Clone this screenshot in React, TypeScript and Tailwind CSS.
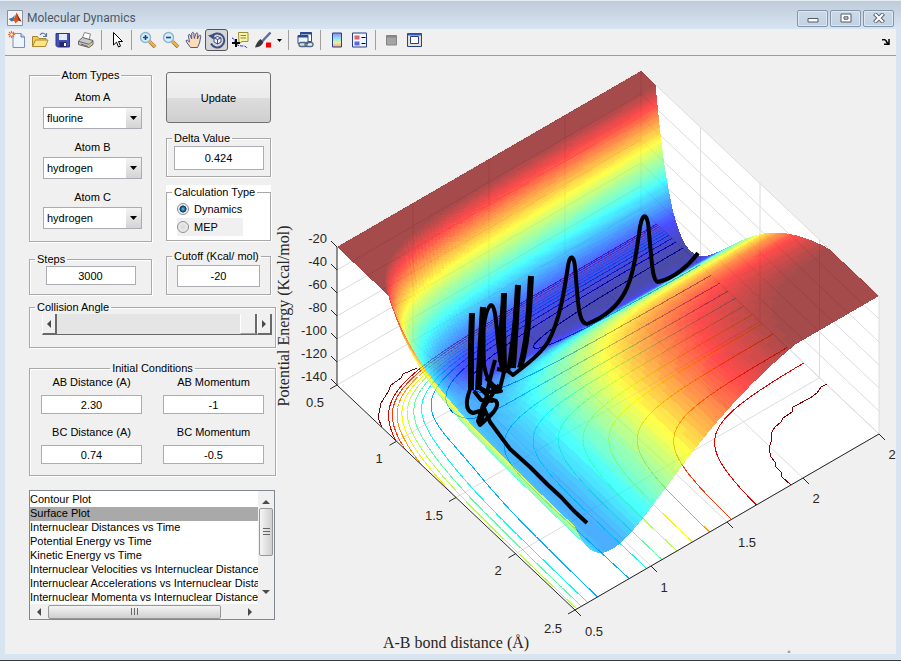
import React, { ReactNode, useMemo, useState } from "react";

/* ---------- LEPS potential for collinear F + H2 ---------- */

const HF = { d: 136, beta: 2.2187, re: 0.917, s: 0.145 };
const HH = { d: 106, beta: 1.942, re: 0.7419, s: 0.12 };
type Bond = typeof HF;

function integrals(bond: Bond, r: number): [number, number] {
  const e1 = Math.exp(-bond.beta * (r - bond.re));
  const e2 = e1 * e1;
  const k = bond.d / (4 * (1 + bond.s));
  return [
    k * ((3 + bond.s) * e2 - (2 + 6 * bond.s) * e1),
    k * ((1 + 3 * bond.s) * e2 - (6 + 2 * bond.s) * e1),
  ];
}

const CUTOFF = -20;
const FLOOR = -136;

function energy(ab: number, bc: number): number {
  const [q1, j1] = integrals(HF, ab);
  const [q2, j2] = integrals(HH, bc);
  const [q3, j3] = integrals(HF, ab + bc);
  const root = Math.sqrt(((j1 - j2) ** 2 + (j2 - j3) ** 2 + (j3 - j1) ** 2) / 2);
  return Math.max(FLOOR, Math.min(CUTOFF, q1 + q2 + q3 - root));
}

/* ---------- projection and colours ---------- */

function project(ab: number, bc: number, z = -140): [number, number] {
  const u = (ab - 0.5) / 2;
  const v = (bc - 0.5) / 2;
  return [337 + 238 * u + 304 * v, 385 + 225 * u - 176 * v - (z + 140) * 1.15];
}

const pt = (p: [number, number]) => `${p[0].toFixed(1)} ${p[1].toFixed(1)}`;

function jet(t: number): string {
  const ch = (c: number) =>
    Math.round(255 * Math.max(0, Math.min(1, 1.5 - Math.abs(4 * t - c))));
  return `rgb(${ch(3)},${ch(2)},${ch(1)})`;
}

const SHADES = 80;

function steps(spans: [number, number, number][]): number[] {
  const out: number[] = [];
  for (const [from, to, count] of spans) {
    for (let i = 0; i < count; i++) out.push(from + ((to - from) * i) / count);
  }
  out.push(spans[spans.length - 1][1]);
  return out;
}

/* The repulsive walls are steep, so they are sampled more finely. */
const abNodes = steps([[0.5, 0.6, 6], [0.6, 0.84, 96], [0.84, 0.94, 20], [0.94, 2.5, 78]]);
const bcNodes = steps([[0.5, 0.8, 40], [0.8, 2.5, 68]]);

function buildSurface(field: number[][]) {
  const faces: { d: string; fill: string }[] = [];
  const shade = (i: number, j: number) => {
    const mean = (field[i][j] + field[i + 1][j] + field[i][j + 1] + field[i + 1][j + 1]) / 4;
    return Math.round(((mean - FLOOR) / (CUTOFF - FLOOR)) * SHADES);
  };
  for (let i = 0; i < abNodes.length - 1; i++) {
    let j = bcNodes.length - 2;
    while (j >= 0) {
      const s = shade(i, j);
      let k = j;
      while (k > 0 && shade(i, k - 1) === s) k--;
      const near: string[] = [];
      const far: string[] = [];
      for (let m = k; m <= j + 1; m++) {
        far.push(pt(project(abNodes[i], bcNodes[m], field[i][m])));
        near.unshift(pt(project(abNodes[i + 1], bcNodes[m], field[i + 1][m])));
      }
      faces.push({ d: `M${far.join("L")}L${near.join("L")}Z`, fill: jet(s / SHADES) });
      j = k - 1;
    }
  }
  return faces;
}

function buildContour(field: number[][], level: number): string {
  let d = "";
  for (let i = 0; i < abNodes.length - 1; i++) {
    for (let j = 0; j < bcNodes.length - 1; j++) {
      const c: [number, number, number][] = [
        [abNodes[i], bcNodes[j], field[i][j]],
        [abNodes[i + 1], bcNodes[j], field[i + 1][j]],
        [abNodes[i + 1], bcNodes[j + 1], field[i + 1][j + 1]],
        [abNodes[i], bcNodes[j + 1], field[i][j + 1]],
      ];
      const hits: string[] = [];
      for (let e = 0; e < 4; e++) {
        const p = c[e];
        const q = c[(e + 1) % 4];
        if (p[2] < level !== q[2] < level) {
          const t = (level - p[2]) / (q[2] - p[2]);
          hits.push(pt(project(p[0] + t * (q[0] - p[0]), p[1] + t * (q[1] - p[1]))));
        }
      }
      if (hits.length >= 2) d += `M${hits[0]}L${hits[1]}`;
    }
  }
  return d;
}

const LEVELS = [-31, -41, -52, -62, -72, -82, -92, -101.5, -112, -122, -132];
const TICKS = [0.5, 1, 1.5, 2, 2.5];
const ENERGIES = [-20, -40, -60, -80, -100, -120, -140];

const seg = (a: [number, number], b: [number, number]) => `M${pt(a)}L${pt(b)}`;

const gridPath = [
  ...TICKS.slice(1).map((t) => seg(project(t, 0.5), project(t, 2.5))),
  ...TICKS.slice(1).map((t) => seg(project(0.5, t), project(2.5, t))),
  ...TICKS.slice(1).map((t) => seg(project(0.5, t), project(0.5, t, -20))),
  ...TICKS.slice(1).map((t) => seg(project(t, 2.5), project(t, 2.5, -20))),
  ...ENERGIES.map((z) => seg(project(0.5, 0.5, z), project(0.5, 2.5, z))),
  ...ENERGIES.map((z) => seg(project(0.5, 2.5, z), project(2.5, 2.5, z))),
].join("");

const tickPath = [
  ...ENERGIES.map((z) => {
    const [x, y] = project(0.5, 0.5, z);
    return `M${x} ${y}l-6 -6`;
  }),
  ...TICKS.map((t) => `M${pt(project(t, 0.5))}l-7 4`),
  ...TICKS.map((t) => `M${pt(project(2.5, t))}l6 6`),
].join("");

const AB_LABELS: [string, number, number][] = [
  ["0.5", 315, 407], ["1", 379, 463], ["1.5", 434, 520], ["2", 498, 575], ["2.5", 553, 633],
];
const BC_LABELS: [string, number, number][] = [
  ["0.5", 594, 636], ["1", 664, 592], ["1.5", 747, 547], ["2", 816, 503], ["2", 892, 459],
];

function Plot() {
  const { faces, contours } = useMemo(() => {
    const field = abNodes.map((a) => bcNodes.map((b) => energy(a, b)));
    return {
      faces: buildSurface(field),
      contours: LEVELS.map((l) => ({
        d: buildContour(field, l),
        c: jet((l - FLOOR) / (CUTOFF - FLOOR)),
      })),
    };
  }, []);
  return (
    <svg viewBox="276 56 620 597" className="block w-full" role="img" aria-label="Potential energy surface">
      <path d="M337 385L337 247L641 71L879 296L879 434L575 610Z" fill="#fff" />
      <path d={gridPath} stroke="#dcdcdc" fill="none" />
      <g fill="none" shapeRendering="crispEdges">
        {contours.map((c) => (
          <path key={c.c} d={c.d} stroke={c.c} />
        ))}
        <path
          stroke="#800000"
          d="M827 384L821 387L817 393L810 398L793 407L792 412L783 418L781 422L775 427L772 432L771 442L769 448L771 457L775 462L776 467L781 472L782 477L791 485M417 368L403 374L401 378L391 385L388 392L381 403L378 418L382 427"
        />
      </g>
      <path d="M337 247L337 385L575 610L879 434" stroke="#262626" fill="none" />
      <path d={tickPath} stroke="#262626" fill="none" />
      <g opacity="0.7" shapeRendering="crispEdges">
        {faces.map((f, i) => (
          <path key={i} d={f.d} fill={f.fill} />
        ))}
      </g>
      <g fill="none" stroke="#000" strokeLinejoin="round">
        <path
          strokeWidth="4"
          d="M698 253C690 264 675 278 658 282C652 280 652 262 649 233C648 214 643 210 640 227C636 255 633 277 625 292C615 311 600 319 587 324C578 324 578 300 575 267C574 256 570 253 568 266C564 292 560 320 548 342C539 356 530 361 522 368L513 375L508 371L497 369"
        />
        <path
          strokeWidth="6"
          d="M531 276L529 310Q527 345 520 368M518 285L516 320L513 368M504 293L503 325L504 368M483 307L481 340L478 390M472 313L471 345L471 390"
        />
        <path
          strokeWidth="4"
          d="M504 295Q499 335 500 362M518 285Q514 335 508 372M484 310Q483 345 484 365Q487 382 496 392M480 385Q482 310 491 305C498 306 496 350 503 372M472 385C465 400 465 411 473 413L483 410L487 395L477 385M478 386C484 392 492 393 501 391L493 385L486 378M505 368L499 392M495 360Q488 385 485 405M487 398L496 401Q500 406 490 416L480 425L478 421L484 402M484 407Q495 390 499 385M474 391L481 400L493 401M484 412L480 424"
        />
        <path strokeWidth="4" d="M484 408L490 422L510 449L530 467L548 485L561 497L574 511L587 523" />
      </g>
      <g fill="#262626" className="font-['Liberation_Sans',Arial,sans-serif] text-[13px]">
        {ENERGIES.map((z) => (
          <text key={z} x="327" y={243 + (-20 - z) * 1.15} textAnchor="end">
            {z}
          </text>
        ))}
        {[...AB_LABELS, ...BC_LABELS].map(([t, x, y]) => (
          <text key={`${x}-${y}`} x={x} y={y} textAnchor="middle">
            {t}
          </text>
        ))}
      </g>
      <g fill="#262626" textAnchor="middle" className="font-['Liberation_Serif','Times_New_Roman',serif] text-[16px]">
        <text x="456" y="648">A-B bond distance (Å)</text>
        <text transform="translate(289 316) rotate(-90)">Potential Energy (Kcal/mol)</text>
      </g>
      <circle cx="789" cy="652" r="1" fill="none" stroke="#8a8a8a" />
    </svg>
  );
}

/* ---------- toolbar ---------- */

const Icon = ({ children }: { children: ReactNode }) => (
  <svg viewBox="0 0 18 18" className="size-[18px]" aria-hidden="true">
    {children}
  </svg>
);

function Tool({ label, active, children }: { label: string; active?: boolean; children: ReactNode }) {
  return (
    <button
      type="button"
      aria-label={label}
      aria-pressed={active}
      className={
        active
          ? "flex h-[22px] w-[23px] items-center justify-center rounded-[3px] border border-[#555] bg-[#d6d6d6]"
          : "flex h-[22px] w-[23px] items-center justify-center"
      }
    >
      <Icon>{children}</Icon>
    </button>
  );
}

const Sep = () => <span className="mx-1 h-5 w-px bg-[#a0a0a0]" />;

function Magnifier({ plus }: { plus?: boolean }) {
  return (
    <>
      <path d="M10.5 10.5L16 16" stroke="#8a6a3a" strokeWidth="3.6" />
      <path d="M10.5 10.5L16 15.6" stroke="#f3b04a" strokeWidth="2.4" />
      <circle cx="6.5" cy="6.5" r="5" fill="#d3f0f8" stroke="#8db4cf" strokeWidth="1.4" />
      <path d={plus ? "M4 6.5h5M6.5 4v5" : "M4 6.5h5"} stroke="#1d3f94" strokeWidth="1.6" />
    </>
  );
}

function Toolbar() {
  return (
    <div className="flex h-[27px] items-center border-b border-[#9c9c9c] bg-[#f0f0f0] pb-1" role="toolbar">
      <Tool label="New figure">
        <path d="M5 2.5h8l3.5 3.5v10.5h-11.5z" fill="#eef5ff" stroke="#7b8fc0" />
        <path d="M13 2.5v3.5h3.5" fill="#c4d4f0" stroke="#5f78b4" />
        <path d="M3.5 0v7M0 3.5h7M1 1l5 5M6 1L1 6" stroke="#e0683c" strokeWidth="1.1" />
        <circle cx="3.5" cy="3.5" r="1.3" fill="#fff3c0" />
      </Tool>
      <Tool label="Open">
        <path d="M1.5 15.5V5.5h5l1.5 2h7v2" fill="#f2cc58" stroke="#a8842a" />
        <path d="M1.5 15.5l3-6.5h12.5l-2.5 6.5z" fill="#fbe48a" stroke="#b08a2a" />
        <path d="M9 4c2-3 5-2 6 1M15.5 2v3.5h-3.5" fill="none" stroke="#5a7ea8" strokeWidth="1.2" />
      </Tool>
      <Tool label="Save">
        <path d="M2 2.5h13.5v13.5h-12l-1.5-1.5z" fill="#4450b8" stroke="#2b3590" />
        <path d="M5 3h8v6h-8z" fill="#e4ecfa" />
        <path d="M5.5 11h7v5h-7z" fill="#23286a" />
        <path d="M10 12h2v3h-2z" fill="#fff" />
      </Tool>
      <Tool label="Print">
        <path d="M5 8L7.5 1.5l6 1.5-1.5 6z" fill="#fff" stroke="#888" />
        <path d="M1.5 10l4-3.5 10.5 3v4l-4 3-10.5-3z" fill="#c9c9c9" stroke="#666" />
        <path d="M2 10.5l10 2.8 4-3.3M4 13l7 2.5" fill="none" stroke="#666" />
        <path d="M12 14l2-1.5" stroke="#e0b020" strokeWidth="1.5" />
      </Tool>
      <Sep />
      <button type="button" aria-label="Edit plot" className="flex h-[22px] w-[21px] items-center justify-center">
        <Icon>
          <path d="M5.5 1.5v12.5l3-2.8 2 4.8 2-.9-2-4.6h4z" fill="#fff" stroke="#000" />
        </Icon>
      </button>
      <Sep />
      <Tool label="Zoom in"><Magnifier plus /></Tool>
      <Tool label="Zoom out"><Magnifier /></Tool>
      <Tool label="Pan">
        <path
          d="M5.5 16.5L1.5 11q-1.2-2 .8-1.8l2.2 1.8L3.3 4.5q.2-1.8 1.8-.6l1.5 4L6.8 2q1-1.5 2 0l.5 5.5L11 2.3q1.3-1 1.9.3L12.3 8l2-3.6q1.4-.7 1.5.8L14.5 12l-2 4.5z"
          fill="#fbdcb8"
          stroke="#4d5c96"
        />
      </Tool>
      <Tool label="Rotate 3D" active>
        <path d="M3.5 5.5A7 7 0 1 1 3 12.5" fill="none" stroke="#3d4f86" strokeWidth="2" />
        <path d="M0 4.5l7-2-1.5 6z" fill="#3d4f86" />
        <path d="M6 7l3.5-1.5L13 7v4l-3.5 2L6 11zM6 7l3.5 1.5L13 7M9.5 8.5V13" fill="#eef2fa" stroke="#3d4f86" />
      </Tool>
      <Tool label="Data cursor">
        <path d="M7.5 1.5h9.5v9h-6l-3 2z" fill="#fbf6a6" stroke="#9a8f3c" />
        <path d="M9.5 4.5h5.5M9.5 7h5.5" stroke="#8a8450" />
        <path d="M1 7q2 0 3 4t8 4q3 0 4 2" fill="none" stroke="#2222dd" strokeDasharray="3 1" />
        <path d="M5 8v8M1 12h8" stroke="#000" strokeWidth="2" />
      </Tool>
      <Tool label="Brush">
        <path d="M16.5 1.5L8.5 10" stroke="#5a6ba8" strokeWidth="2.4" />
        <path d="M6.5 8l3 3q-2 5-8.5 5.5 1.5-5.5 5.5-8.5z" fill="#3a3a3a" />
        <path d="M12 11.5h5v5h-5z" fill="#f00" />
      </Tool>
      <button type="button" aria-label="Brush colour" className="flex h-[22px] w-[10px] items-center justify-center">
        <svg viewBox="0 0 5 3" className="h-[3px] w-[5px]" aria-hidden="true"><path d="M0 0h5L2.5 3z" /></svg>
      </button>
      <Sep />
      <Tool label="Link plot">
        <path d="M4.5 1.5h11v9h-11z" fill="#fff" stroke="#2b4a8a" />
        <path d="M4 2.5h12" stroke="#2b4a8a" strokeWidth="2" />
        <path d="M2 4.5h10v8h-10z" fill="#eef3fb" stroke="#2b4a8a" />
        <path d="M2 5.5h10" stroke="#2b4a8a" strokeWidth="2" />
        <rect x="3" y="11.5" width="8" height="4" rx="2" fill="#d5dde8" stroke="#52677f" strokeWidth="1.3" />
        <rect x="9" y="11.5" width="8" height="4" rx="2" fill="none" stroke="#52677f" strokeWidth="1.3" />
      </Tool>
      <Sep />
      <Tool label="Insert colorbar">
        <defs>
          <linearGradient id="bar" x1="0" y1="0" x2="0" y2="1">
            <stop offset="0" stopColor="#8f86e8" />
            <stop offset="0.4" stopColor="#8fe6f2" />
            <stop offset="0.7" stopColor="#f2ee98" />
            <stop offset="1" stopColor="#f2a090" />
          </linearGradient>
        </defs>
        <path d="M4.5 2h9v14h-9z" fill="url(#bar)" stroke="#27408b" />
      </Tool>
      <Tool label="Insert legend">
        <path d="M1.5 2h14v14h-14z" fill="#f2f5fb" stroke="#27408b" />
        <path d="M3.5 4.5h5v4h-5z" fill="#e06464" />
        <path d="M3.5 10.5h5v4h-5z" fill="#6464e0" />
        <path d="M10.5 6.5h4M10.5 12.5h4" stroke="#000" />
      </Tool>
      <Sep />
      <Tool label="Hide plot tools">
        <path d="M3.5 4.5h10v9.5h-10z" fill="#a4a4a4" stroke="#858585" />
        <path d="M3.5 5.5h10" stroke="#858585" strokeWidth="2" />
      </Tool>
      <Tool label="Show plot tools">
        <path d="M1.5 2.5h14v13h-14z" fill="#e6e3cf" stroke="#27408b" />
        <path d="M1.5 3.5h14" stroke="#3c5bb4" strokeWidth="2" />
        <path d="M4.5 5.5h8v7h-8z" fill="#fff" stroke="#27408b" />
      </Tool>
      <button type="button" aria-label="Dock figure" className="mt-1 mr-1 ml-auto flex size-3 items-center justify-center">
        <svg viewBox="0 0 8 6" className="h-[6px] w-[8px]" aria-hidden="true">
          <path d="M0 1q3-1.5 5 2M7 0v6M2 5.3h5.5M4 2.5L7 5.5" fill="none" stroke="#000" strokeWidth="1.5" />
        </svg>
      </button>
    </div>
  );
}

/* ---------- controls ---------- */

function Panel({
  title, centered, className = "", children,
}: { title: string; centered?: boolean; className?: string; children: ReactNode }) {
  return (
    <fieldset className={`min-w-0 border border-[#a9a9a9] shadow-[1px_1px_0_#fff,inset_1px_1px_0_#fff] ${className}`}>
      <legend className={centered ? "mx-auto px-0.5" : "ml-[5px] px-0.5"}>{title}</legend>
      {children}
    </fieldset>
  );
}

function AtomSelect({ id, label, value }: { id: string; label: string; value: string }) {
  return (
    <div className="flex flex-col items-center gap-[3px]">
      <label htmlFor={id}>{label}</label>
      <div className="relative">
        <select
          id={id}
          defaultValue={value}
          className="block h-[22px] w-[99px] appearance-none border border-[#a9abb5] bg-white pl-[3px]"
        >
          <option>fluorine</option>
          <option>hydrogen</option>
        </select>
        <span className="pointer-events-none absolute inset-y-px right-px flex w-[15px] items-center justify-center bg-linear-to-b from-[#f4f4f4] to-[#d4d4d4]">
          <svg viewBox="0 0 7 4" className="h-[4px] w-[7px]" aria-hidden="true"><path d="M0 0h7L3.5 4z" /></svg>
        </span>
      </div>
    </div>
  );
}

const box = "block border border-[#abadb3] bg-white text-center";

function Field({ id, label, value }: { id: string; label: string; value: string }) {
  return (
    <div className="flex flex-col items-center gap-[6px]">
      <label htmlFor={id}>{label}</label>
      <input id={id} defaultValue={value} className={`${box} h-[19px] w-[101px]`} />
    </div>
  );
}

const radio =
  "size-[12px] appearance-none rounded-full border border-[#8e8f8f] bg-[radial-gradient(circle,#d8d8d8,#f4f4f4)] checked:bg-[radial-gradient(circle,#6cc4ee_0,#0d4f78_36%,#0d3550_46%,#e8f0f4_54%)]";

const PLOTS = [
  "Contour Plot",
  "Surface Plot",
  "Internuclear Distances vs Time",
  "Potential Energy vs Time",
  "Kinetic Energy vs Time",
  "Internuclear Velocities vs Internuclear Distance",
  "Internuclear Accelerations vs Internuclear Distance",
  "Internuclear Momenta vs Internuclear Distance",
];

const Arrow = ({ d }: { d: string }) => (
  <svg viewBox="0 0 8 8" className="size-2" aria-hidden="true"><path d={d} fill="#4a4a4a" /></svg>
);

function PlotList() {
  return (
    <div className="mt-[14px] grid h-[130px] w-[246px] grid-cols-[1fr_16px] grid-rows-[1fr_15px] border border-[#828790] bg-[#f0f0f0]">
      <select
        size={8}
        aria-label="Plot type"
        defaultValue="Surface Plot"
        className="h-full w-full min-w-0 appearance-none overflow-hidden bg-white pt-0.5 [scrollbar-width:none]"
      >
        {PLOTS.map((p) => (
          <option
            key={p}
            className="h-[14px] min-h-0 overflow-hidden p-0 leading-[14px] text-black checked:bg-[linear-gradient(#a9a9a9,#a9a9a9)] checked:text-black"
          >
            {p}
          </option>
        ))}
      </select>
      <div className="flex flex-col items-center pt-1 pb-1">
        <button type="button" aria-label="Scroll up" className="flex h-[13px] items-center"><Arrow d="M0 6h8L4 2z" /></button>
        <div className="flex h-12 w-[14px] items-center justify-center rounded-[2px] border border-[#979797] bg-linear-to-r from-[#f5f5f5] to-[#cfcfcf]">
          <span className="h-[8px] w-[7px] bg-[repeating-linear-gradient(#666_0_1px,#0000_1px_3px)]" />
        </div>
        <button type="button" aria-label="Scroll down" className="mt-auto flex h-4 items-center"><Arrow d="M0 2h8L4 6z" /></button>
      </div>
      <div className="flex items-center">
        <button type="button" aria-label="Scroll left" className="flex w-[18px] justify-center"><Arrow d="M6 0v8L2 4z" /></button>
        <div className="flex h-[14px] w-[173px] items-center justify-center rounded-[2px] border border-[#979797] bg-linear-to-b from-[#f5f5f5] to-[#cfcfcf]">
          <span className="h-[7px] w-[8px] bg-[repeating-linear-gradient(90deg,#666_0_1px,#0000_1px_3px)]" />
        </div>
        <button type="button" aria-label="Scroll right" className="mr-1 ml-auto"><Arrow d="M2 0v8L6 4z" /></button>
      </div>
    </div>
  );
}

function CollisionSlider() {
  const [angle, setAngle] = useState(180);
  const step = (by: number) => setAngle((a) => Math.max(0, Math.min(180, a + by)));
  const btn =
    "flex w-[15px] items-center justify-center border-r-2 border-b-2 border-l border-r-[#696969] border-b-[#696969] border-l-white bg-[#f0f0f0]";
  return (
    <div className="ml-3 flex h-[21px] w-[230px]">
      <button type="button" aria-label="Decrease angle" onClick={() => step(-1)} className={btn}>
        <Arrow d="M6 0v8L2 4z" />
      </button>
      <input
        type="range"
        min={0}
        max={180}
        value={angle}
        onChange={(e) => setAngle(Number(e.target.value))}
        aria-label="Collision angle"
        className="h-[21px] min-w-0 flex-1 appearance-none border-b border-[#696969] bg-[#e5e5e5] [&::-webkit-slider-thumb]:h-5 [&::-webkit-slider-thumb]:w-[17px] [&::-webkit-slider-thumb]:appearance-none [&::-webkit-slider-thumb]:border-r-2 [&::-webkit-slider-thumb]:border-b [&::-webkit-slider-thumb]:border-l [&::-webkit-slider-thumb]:border-r-[#696969] [&::-webkit-slider-thumb]:border-b-[#a0a0a0] [&::-webkit-slider-thumb]:border-l-white [&::-webkit-slider-thumb]:bg-[#f0f0f0]"
      />
      <button type="button" aria-label="Increase angle" onClick={() => step(1)} className={btn}>
        <Arrow d="M2 0v8L6 4z" />
      </button>
    </div>
  );
}

function Controls() {
  return (
    <form className="w-[271px] shrink-0 pt-3 pl-6" onSubmit={(e) => e.preventDefault()}>
      <div className="flex gap-[14px]">
        <div className="flex w-[123px] flex-col gap-[10px]">
          <Panel title="Atom Types" centered className="pt-2 pb-3">
            <div className="flex flex-col gap-[11px] pl-1">
              <AtomSelect id="atom-a" label="Atom A" value="fluorine" />
              <AtomSelect id="atom-b" label="Atom B" value="hydrogen" />
              <AtomSelect id="atom-c" label="Atom C" value="hydrogen" />
            </div>
          </Panel>
          <Panel title="Steps" className="pb-[9px]">
            <input aria-label="Steps" defaultValue="3000" className={`${box} mx-auto h-[19px] w-[90px]`} />
          </Panel>
        </div>
        <div className="flex w-[105px] flex-col gap-2 pt-1">
          <button
            type="submit"
            className="h-[51px] rounded-[3px] border border-[#707070] bg-[linear-gradient(#f2f2f2,#ebebeb_50%,#dddddd_50%,#cfcfcf)]"
          >
            Update
          </button>
          <Panel title="Delta Value" className="pt-px pb-[6px]">
            <input aria-label="Delta Value" defaultValue="0.424" className={`${box} mx-auto h-6 w-[90px]`} />
          </Panel>
          <div className="bg-white">
            <Panel title="Calculation Type" className="pt-px pb-1">
              <label className="ml-[10px] flex h-[18px] items-center gap-[5px]">
                <input type="radio" name="calc" defaultChecked className={radio} />
                Dynamics
              </label>
              <label className="ml-[10px] flex h-[18px] w-[66px] items-center gap-[5px] bg-[#f0f0f0]">
                <input type="radio" name="calc" className={radio} />
                MEP
              </label>
            </Panel>
          </div>
          <Panel title="Cutoff (Kcal/ mol)" className="pt-0.5 pb-[7px]">
            <input aria-label="Cutoff" defaultValue="-20" className={`${box} mx-auto h-[22px] w-[83px]`} />
          </Panel>
        </div>
      </div>
      <Panel title="Collision Angle" className="mt-[5px] pb-3">
        <CollisionSlider />
      </Panel>
      <Panel title="Initial Conditions" centered className="mt-[13px] pb-[11px]">
        <div className="flex justify-between px-[11px]">
          <div className="flex flex-col gap-[11px]">
            <Field id="ab-distance" label="AB Distance (A)" value="2.30" />
            <Field id="bc-distance" label="BC Distance (A)" value="0.74" />
          </div>
          <div className="flex flex-col gap-[11px]">
            <Field id="ab-momentum" label="AB Momentum" value="-1" />
            <Field id="bc-momentum" label="BC Momentum" value="-0.5" />
          </div>
        </div>
      </Panel>
      <PlotList />
    </form>
  );
}

/* ---------- window ---------- */

function WindowButton({ label, children }: { label: string; children: ReactNode }) {
  return (
    <button
      type="button"
      aria-label={label}
      className="flex h-[17px] w-[31px] items-center justify-center rounded-[2px] border border-[#8295ab] bg-linear-to-b from-[#cbd8e6] to-[#c2d2e3] shadow-[inset_0_0_0_1px_#dce8f4]"
    >
      <svg viewBox="0 0 14 10" className="h-[10px] w-[14px] shrink-0" aria-hidden="true">
        {children}
      </svg>
    </button>
  );
}

export default function App() {
  return (
    <div className="flex min-h-screen flex-col border-b border-[#3c3c3c] bg-[#d7e4f2] font-['Liberation_Sans',Arial,sans-serif] text-[11px] leading-[14px] text-black">
      <header className="flex h-[29px] items-center border-t border-[#e4ecf4] bg-linear-to-b from-[#bfcbd8] to-[#d7e4f2] pt-1.5 pr-[7px] pl-[7px]">
        <svg viewBox="0 0 16 16" className="size-4" aria-hidden="true">
          <path d="M.5 .5h15v15h-15z" fill="#f4f4f4" stroke="#8a9098" />
          <path d="M1.5 9l4-1.5L8 5l-1.5 6-2 .5z" fill="#3a78a8" />
          <path d="M5.5 11Q8 8 9.5 2.5q2 5 5 9l-3-1-3 3-1.5-3z" fill="#d9541e" />
          <path d="M9.5 2.5q2 5 5 9l-3-1z" fill="#8a2410" />
        </svg>
        <h1 className="ml-1 font-[Roboto,'Segoe_UI',sans-serif] text-[12px] leading-4 text-[#4c5866]">Molecular Dynamics</h1>
        <div className="ml-auto flex gap-0.5">
          <WindowButton label="Minimize"><path d="M2 5.5h10v3.5h-10z" fill="#fff" stroke="#555b66" /></WindowButton>
          <WindowButton label="Maximize">
            <path d="M2 1h10v8h-10z" fill="#fff" stroke="#555b66" />
            <path d="M5 3.8h4v2.4h-4z" fill="#c8d4e0" stroke="#555b66" />
          </WindowButton>
          <WindowButton label="Close">
            <path d="M2.5 .5l9 9M11.5 .5l-9 9" stroke="#555b66" strokeWidth="4" />
            <path d="M3 1l8 8M11 1l-8 8" stroke="#fff" strokeWidth="2.2" />
          </WindowButton>
        </div>
      </header>
      <div className="mx-[5px] mb-[6px] flex flex-1 flex-col bg-[#f0f0f0]">
        <Toolbar />
        <main className="flex flex-1 items-start">
          <Controls />
          <div className="min-w-0 flex-1">
            <Plot />
          </div>
        </main>
      </div>
    </div>
  );
}
